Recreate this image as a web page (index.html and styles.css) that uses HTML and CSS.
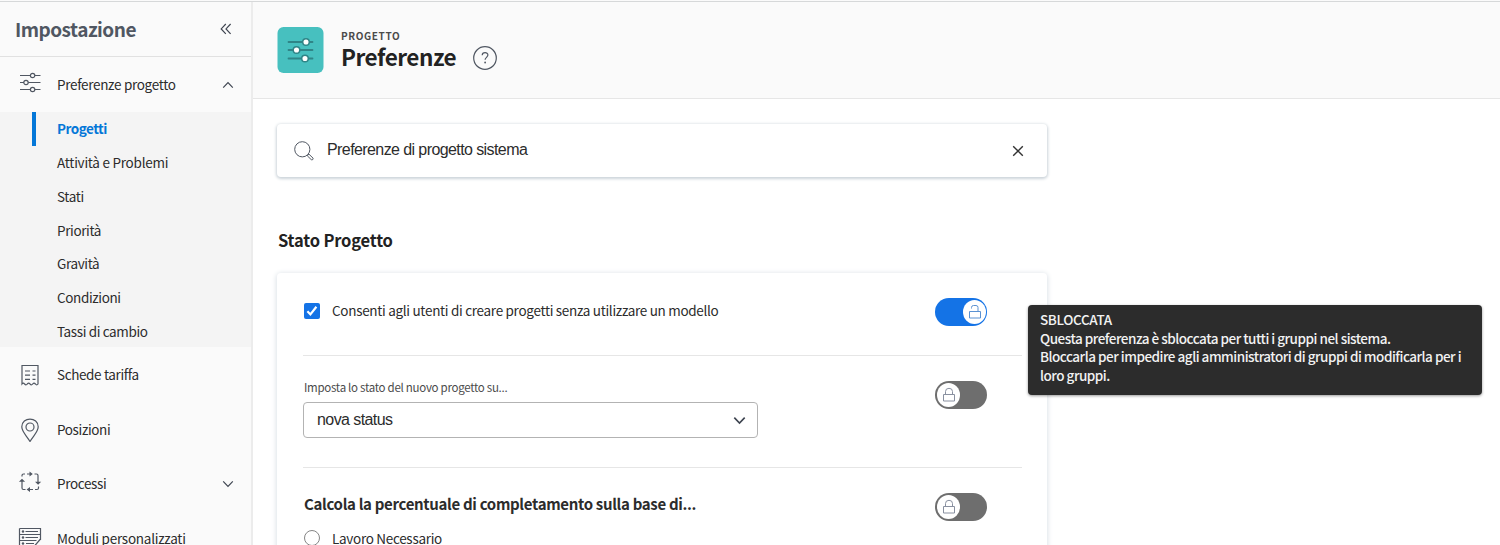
FILE: index.html
```html
<!DOCTYPE html>
<html lang="it">
<head>
<meta charset="utf-8">
<title>Preferenze progetto</title>
<link rel="stylesheet" href="styles.css">
</head>
<body>
<svg class="defs" aria-hidden="true">
  <symbol id="locked" viewBox="0 0 14 16"><path d="M1.500 7.500h11v6.500h-11zM3.500 7.500V4.500q0-3.200 3.500-3.200t3.500 3.200v3"/></symbol>
  <symbol id="unlocked" viewBox="0 0 14 16"><path d="M1.500 7.500h11v6.500h-11zM10 7.500V3.500q0-2-2-2H5.500q-2 0-2 2v1"/></symbol>
  <symbol id="chevron" viewBox="0 0 12 8"><path d="M1.200 1.400 6 6.300l4.800-4.900"/></symbol>
</svg>
<div class="app">
  <aside class="sidebar">
    <div class="side-head">
      <h2 class="side-title"><span>Impostazione</span></h2>
      <svg class="collapse" viewBox="0 0 12 12"><path d="M5.800 1 1.200 5.900l4.600 4.900M10.600 1 6 5.900l4.600 4.900"/></svg>
    </div>
    <nav>
      <a class="item item-first">
        <svg class="icon" viewBox="0 0 24 24"><path d="M2 4.500h10.300M17 4.500h5.500M2 11.500h4M10.200 11.500h12.300M2 18.500h10.300M17 18.500h5.500"/><circle cx="14.600" cy="4.500" r="2.200"/><circle cx="8" cy="11.500" r="2.200"/><circle cx="14.600" cy="18.500" r="2.200"/></svg>
        <span class="t-pref">Preferenze progetto</span>
        <svg class="chev up"><use href="#chevron"/></svg>
      </a>
      <div class="submenu">
        <a class="sub active"><span class="t-prog">Progetti</span></a>
        <a class="sub"><span class="t-att">Attività e Problemi</span></a>
        <a class="sub"><span>Stati</span></a>
        <a class="sub"><span>Priorità</span></a>
        <a class="sub"><span>Gravità</span></a>
        <a class="sub"><span>Condizioni</span></a>
        <a class="sub"><span>Tassi di cambio</span></a>
      </div>
      <a class="item">
        <svg class="icon" viewBox="0 0 24 24"><path d="M4 21V2.500h16V21q-1.300 1.700-2.600 0-1.400-1.700-2.700 0-1.300 1.700-2.700 0-1.300-1.700-2.700 0-1.300 1.700-2.700 0Q5.300 19.300 4 21zM7 8h5M14.500 8h3M7 12.200h5M14.500 12.200h3M7 16.400h5M14.500 16.400h3"/></svg>
        <span>Schede tariffa</span>
      </a>
      <a class="item">
        <svg class="icon" viewBox="0 0 24 24"><path d="M12 23.500C8.500 17.500 3.800 13.800 3.800 8.800c0-10.300 16.400-10.300 16.400 0 0 5-4.700 8.700-8.200 14.700z"/><circle cx="12" cy="9" r="4"/></svg>
        <span>Posizioni</span>
      </a>
      <a class="item">
        <svg class="icon cycle" viewBox="0 0 24 24"><path d="M4 6.500V5.500Q4 4 5.500 4H7M9 4h3.500M16.500 4h2Q20 4 20 5.500V12M20.500 16.500V18q0 1.500-1.500 1.500h-2M15 19.500h-4M7.500 19.500h-2Q4 19.500 4 18v-7.500"/><path class="fill" d="M11.500 1.500 14.800 4l-3.300 2.500zM17 11.800h6.200l-3.100 3zM12 17l-3.400 2.500L12 22zM.900 11.800h6.200L4 8.800z"/></svg>
        <span>Processi</span>
        <svg class="chev"><use href="#chevron"/></svg>
      </a>
      <a class="item">
        <svg class="icon" viewBox="0 0 24 24"><path d="M1.500 1.500h21V13M1.500 1.500v19H13M1.500 7.500h21M1.500 13.500h17M7.500 4.500h12.500M7.500 10.500h12.500M8 16.500h8M22.500 12l-6 7"/><circle class="fill" cx="5" cy="4.500" r="1.200"/><circle class="fill" cx="5" cy="10.500" r="1.200"/><circle class="fill" cx="5" cy="16.500" r="1.200"/></svg>
        <span class="t-mod">Moduli personalizzati</span>
      </a>
    </nav>
  </aside>
  <div class="page">
    <header class="page-head">
      <svg class="badge" viewBox="0 0 46 46"><rect width="46" height="46" rx="6"/><path d="M11 15h24M11 23h24M11 31.500h24"/><circle cx="28.500" cy="15" r="3.300"/><circle cx="19" cy="23" r="3.300"/><circle cx="27.500" cy="31.500" r="3.300"/></svg>
      <div class="titles">
        <div class="eyebrow"><span>PROGETTO</span></div>
        <div class="title-row">
          <h1><span>Preferenze</span></h1>
          <svg class="help" viewBox="0 0 24 24"><circle cx="12" cy="12" r="11.300"/><path d="M9.200 9.300c.1-3.500 5.700-3.500 5.700-.2 0 2.200-2.800 2.300-2.800 4.700"/><circle class="fill" cx="12.100" cy="16.500" r=".9"/></svg>
        </div>
      </div>
    </header>
    <main class="content">
      <div class="search">
        <svg class="lens" viewBox="0 0 20 20"><circle cx="8.300" cy="8.300" r="7.600"/><path d="m13.300 14.800 1.600-1.700 4.100 4q.5.800-.2 1.400t-1.500.2z"/></svg>
        <span class="query">Preferenze di progetto sistema</span>
        <svg class="clear" viewBox="0 0 12 12"><path d="m1.200 1.200 9.600 9.600M10.800 1.200l-9.600 9.600"/></svg>
      </div>
      <h3 class="section"><span>Stato Progetto</span></h3>
      <section class="card">
        <div class="row row-check">
          <label class="check">
            <svg class="box" viewBox="0 0 16 16"><rect width="16" height="16" rx="2"/><path d="m3.400 8.200 3 3.200 6-7.600"/></svg>
            <span class="t-cons">Consenti agli utenti di creare progetti senza utilizzare un modello</span>
          </label>
          <div class="toggle on"><i class="knob"><svg><use href="#unlocked"/></svg></i></div>
        </div>
        <div class="row row-select">
          <div class="field">
            <div class="label"><span>Imposta lo stato del nuovo progetto su...</span></div>
            <div class="select"><span>nova status</span><svg class="chev"><use href="#chevron"/></svg></div>
          </div>
          <div class="toggle"><i class="knob"><svg><use href="#locked"/></svg></i></div>
        </div>
        <div class="row row-calc">
          <div>
            <div class="calc-title"><span>Calcola la percentuale di completamento sulla base di...</span></div>
            <label class="check"><i class="radio"></i><span class="t-lav">Lavoro Necessario</span></label>
          </div>
          <div class="toggle"><i class="knob"><svg><use href="#locked"/></svg></i></div>
        </div>
      </section>
    </main>
  </div>
  <div class="tooltip">
    <div class="tip-head"><span>SBLOCCATA</span></div>
    <div><span>Questa preferenza è sbloccata per tutti i gruppi nel sistema.</span></div>
    <div><span>Bloccarla per impedire agli amministratori di gruppi di modificarla per i</span></div>
    <div><span>loro gruppi.</span></div>
  </div>
</div>
</body>
</html>
```
FILE: styles.css
```css
* { box-sizing: border-box; }
body { margin: 0; background: #fff; color: #2c2c2c; font: 13.5px/20px "Noto Sans CJK SC", "Open Sans", sans-serif; overflow: hidden; }
h1, h2, h3 { margin: 0; }
span { white-space: nowrap; }
svg { display: block; flex: none; fill: none; stroke: #505762; stroke-width: 1.2; }
.fill { fill: #505762; stroke: none; }
.defs { display: none; }
.app { position: relative; display: flex; height: 545px; overflow: hidden; border-top: 1px solid #fafafa; }
.app::before { content: ""; position: absolute; top: 0; left: 0; right: 0; height: 1px; background: #d6d8d9; }

.sidebar { width: 253px; flex: none; background: #fafafa; border-right: 2px solid #ececec; letter-spacing: -.37px; }
.side-head { height: 56px; padding: 1px 19px 0 15px; display: flex; align-items: center; justify-content: space-between; border-bottom: 1px solid #e1e1e1; }
.side-title { font-size: 19px; line-height: 28px; font-weight: 700; letter-spacing: -.5px; color: #505762; }
.collapse { width: 12px; height: 12px; stroke: #3e4450; }
.item { height: 54.7px; display: flex; align-items: center; padding: 0 17px 0 18px; }
.item span { margin-top: -1.5px; }
.item .icon { width: 24px; height: 24px; margin-right: 15px; }
.item .cycle { margin-top: -5px; }
.item-first { height: 55px; }
.item-first .icon { margin-top: -4px; }
.chev { width: 12px; height: 8px; margin-left: auto; stroke: #3e4450; }
.up { transform: rotate(180deg); }
.t-pref { letter-spacing: -.32px; }
.t-att, .t-mod { letter-spacing: -.25px; }
.submenu { background: #f4f4f4; }
.sub { height: 33.65px; display: flex; align-items: center; padding-left: 57px; }
.active { margin-left: 32px; padding-left: 21px; border-left: 4px solid #0477d8; color: #0477d8; font-weight: 700; letter-spacing: -.5px; }
.active span { margin-top: -1px; }

.page { flex: 1; }
.page-head { height: 98px; padding: 26px 24px 0; display: flex; background: #fafafa; border-bottom: 1px solid #e6e6e6; }
.badge { width: 47px; height: 46px; stroke: #2f8587; }
.badge rect { fill: #47c0bf; stroke: none; }
.badge path { stroke-width: 1.8; stroke-linecap: round; }
.badge circle { fill: #fff; stroke-width: 1.5; }
.titles { padding-left: 17px; }
.eyebrow { font-size: 10px; line-height: 17px; font-weight: 700; letter-spacing: .62px; color: #4b4b4b; }
.title-row { display: flex; align-items: center; gap: 17px; }
h1 { margin-top: -3px; font-size: 22.5px; line-height: 30px; letter-spacing: -.48px; color: #222; }
.help { width: 24px; height: 24px; }

.content { padding: 25px 24px 0; }
.search { width: 770px; height: 53px; margin-bottom: 50px; display: flex; align-items: center; padding: 0 23px 0 17px; border-radius: 4px; background: #fff; box-shadow: 0 1px 3px 1px #ccd4da; }
.lens { width: 20px; height: 20px; stroke-width: 1; }
.query { margin: -1px 0 0 13px; font: 16px/20px "Liberation Sans", Arial, sans-serif; letter-spacing: -.59px; }
.clear { width: 12px; height: 12px; margin-left: auto; stroke: #333; stroke-width: 1.4; }
.section { padding-left: 1px; font-size: 16.5px; line-height: 26px; letter-spacing: -.18px; color: #222; }
.card { width: 770px; height: 320px; margin-top: 20px; padding: 0 25px 0 26px; border-radius: 4px; box-shadow: 0 1px 5px 1px #dde3e8; }
.row { display: flex; justify-content: space-between; padding-right: 35px; border-bottom: 1px solid #e6e6e6; }
.row-check { height: 83px; padding-top: 25px; }
.row-select { height: 112px; padding-top: 25px; }
.row-calc { padding-top: 25px; border: 0; }
.check { display: flex; align-items: center; height: 25px; gap: 12px; padding-left: 1px; letter-spacing: -.3px; }
.check .t-cons { margin-top: -1px; }
.box { width: 16px; height: 16px; stroke: #fff; stroke-width: 2.2; }
.box rect { fill: #1473e6; stroke: none; }
.label { margin-top: -4px; padding-left: 1px; font-size: 11.5px; line-height: 20px; letter-spacing: -.28px; color: #4b4b4b; }
.select { width: 455px; height: 36px; margin-top: 5px; padding: 0 11px 0 13px; display: flex; align-items: center; border: 1px solid #b3b3b3; border-radius: 4px; font: 16px/20px "Liberation Sans", Arial, sans-serif; letter-spacing: -.58px; }
.select .chev { width: 13px; height: 9px; stroke-width: 1.5; }
.calc-title { margin: 0 0 10px; padding-left: 1px; font-size: 15px; line-height: 22px; font-weight: 700; letter-spacing: -.32px; }
.radio { width: 16px; height: 16px; border: 1.5px solid #858585; border-radius: 50%; }
.toggle { width: 52px; height: 28px; padding: 2px; border-radius: 14px; background: #6e6e6e; display: flex; align-items: center; }
.toggle.on { padding-right: 1px; background: #1473e6; justify-content: flex-end; }
.knob { width: 23px; height: 24px; border-radius: 50%; background: #fff; display: flex; align-items: center; justify-content: center; }
.knob svg { width: 14px; height: 16px; stroke: #8990a0; stroke-width: 1; }
.on .knob svg { stroke: #5a91d2; }
.tooltip { position: absolute; left: 1028px; top: 304px; width: 454px; height: 90px; padding: 5px 12px; border-radius: 4px; background: #2c2c2c; color: #f2f2f2; box-shadow: 0 1px 3px #0006; line-height: 18.7px; font-weight: 500; letter-spacing: -.49px; }
.tip-head { letter-spacing: -.36px; }
```
